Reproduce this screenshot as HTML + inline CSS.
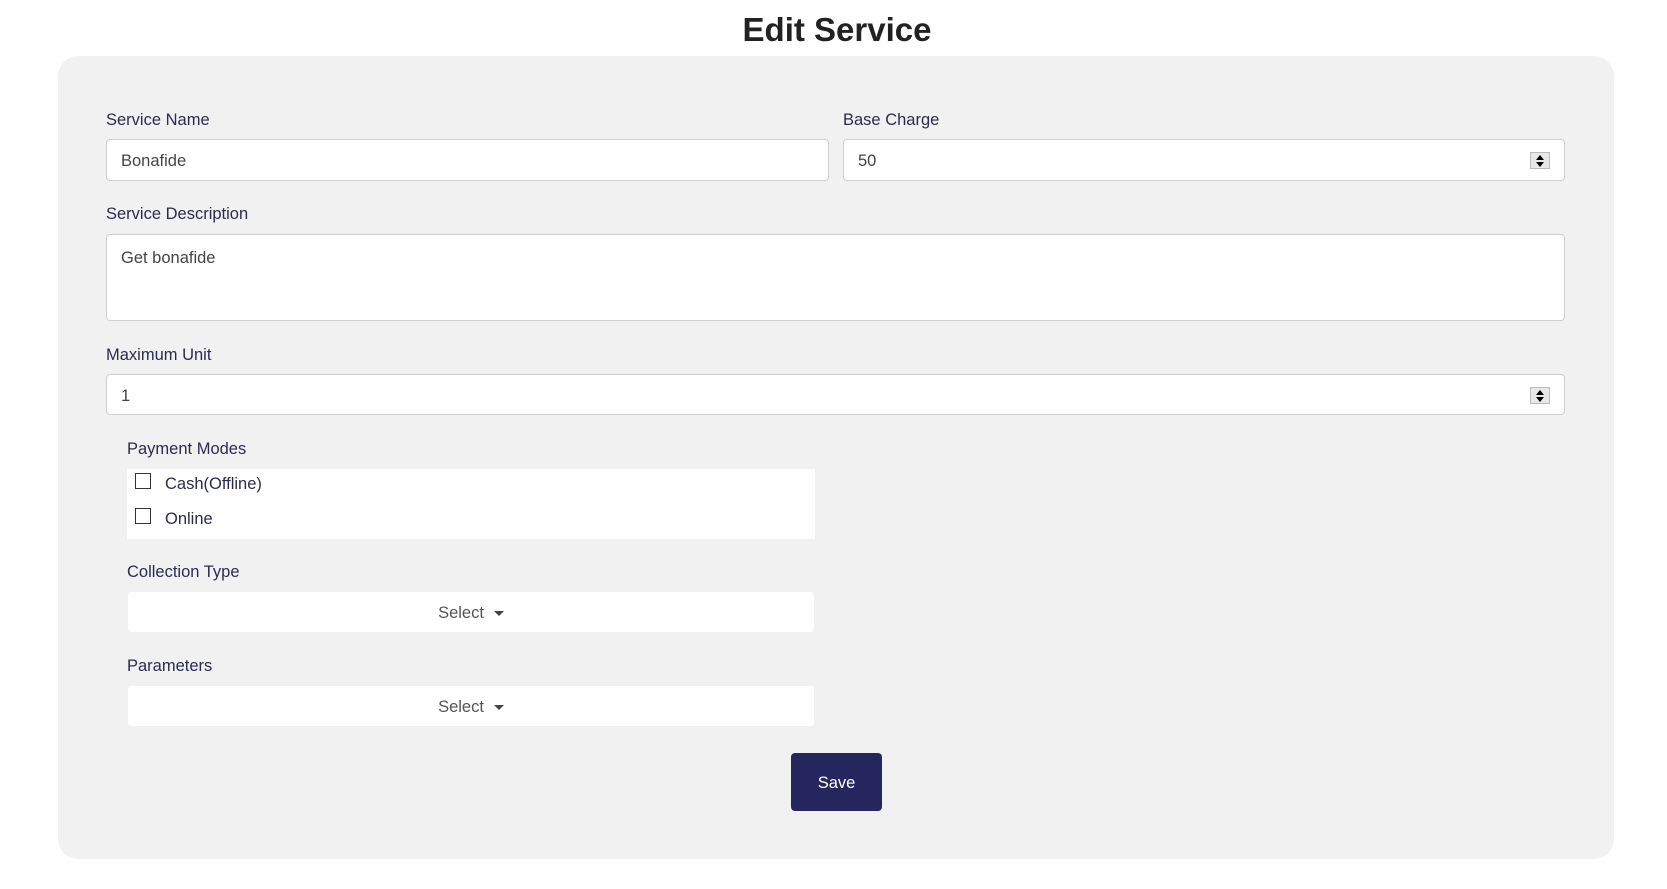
<!DOCTYPE html>
<html><head><style>
*{box-sizing:border-box;margin:0;padding:0}
body{width:1667px;height:889px;background:#fff;font-family:"Liberation Sans",sans-serif;position:relative;overflow:hidden;color:#2b2b4a}
.a{position:absolute}
h1{position:absolute;left:0;width:1674px;text-align:center;top:11px;font-size:33px;font-weight:bold;color:#222}
.card{left:58px;top:56px;width:1556px;height:803px;background:#f1f1f1;border-radius:20px}
.lbl{font-size:16.5px;color:#2b2b4f}
.inp{background:#fff;border:1px solid #cfcfcf;border-radius:4px;font-size:16.5px;color:#444;padding-left:14px;padding-top:3px;display:flex;align-items:center}
.spin{position:absolute;right:14px;top:12px;width:20px;height:17px;border:1px solid #bbb;background:#e8e8e8}
.spin:before{content:"";position:absolute;left:5px;top:2px;border:4px solid transparent;border-bottom:5px solid #000;border-top:0}
.spin:after{content:"";position:absolute;left:5px;top:9px;border:4px solid transparent;border-top:5px solid #000;border-bottom:0}
.sel{background:#fff;border-radius:3px;font-size:16.5px;color:#555;display:flex;align-items:center;justify-content:center;padding-top:2px}
.sel span{display:inline-block;margin-left:10px;border:5px solid transparent;border-top:5px solid #444;border-bottom:0;margin-top:0}
.cb{width:16px;height:16px;border:1.5px solid #333;background:#fff}
</style></head><body>
<h1>Edit Service</h1>
<div class="a card"></div>
<div class="a lbl" style="left:106px;top:111px">Service Name</div>
<div class="a lbl" style="left:843px;top:111px">Base Charge</div>
<div class="a inp" style="left:106px;top:139px;width:723px;height:42px">Bonafide</div>
<div class="a inp" style="left:843px;top:139px;width:722px;height:42px">50<div class="spin"></div></div>
<div class="a lbl" style="left:106px;top:205px">Service Description</div>
<div class="a inp" style="left:106px;top:234px;width:1459px;height:87px;align-items:flex-start;padding-top:14px">Get bonafide</div>
<div class="a lbl" style="left:106px;top:346px">Maximum Unit</div>
<div class="a inp" style="left:106px;top:374px;width:1459px;height:41px">1<div class="spin"></div></div>
<div class="a lbl" style="left:127px;top:440px">Payment Modes</div>
<div class="a" style="left:127px;top:469px;width:688px;height:70px;background:#fff"></div>
<div class="a cb" style="left:135px;top:473px"></div>
<div class="a lbl" style="left:165px;top:475px">Cash(Offline)</div>
<div class="a cb" style="left:135px;top:508px"></div>
<div class="a lbl" style="left:165px;top:510px">Online</div>
<div class="a lbl" style="left:127px;top:563px">Collection Type</div>
<div class="a sel" style="left:128px;top:592px;width:686px;height:40px">Select<span></span></div>
<div class="a lbl" style="left:127px;top:657px">Parameters</div>
<div class="a sel" style="left:128px;top:686px;width:686px;height:40px">Select<span></span></div>
<div class="a" style="left:791px;top:753px;width:91px;height:58px;background:#26265e;border-radius:4px;color:#fff;font-size:16.5px;display:flex;align-items:center;justify-content:center;padding-top:2px">Save</div>
</body></html>
